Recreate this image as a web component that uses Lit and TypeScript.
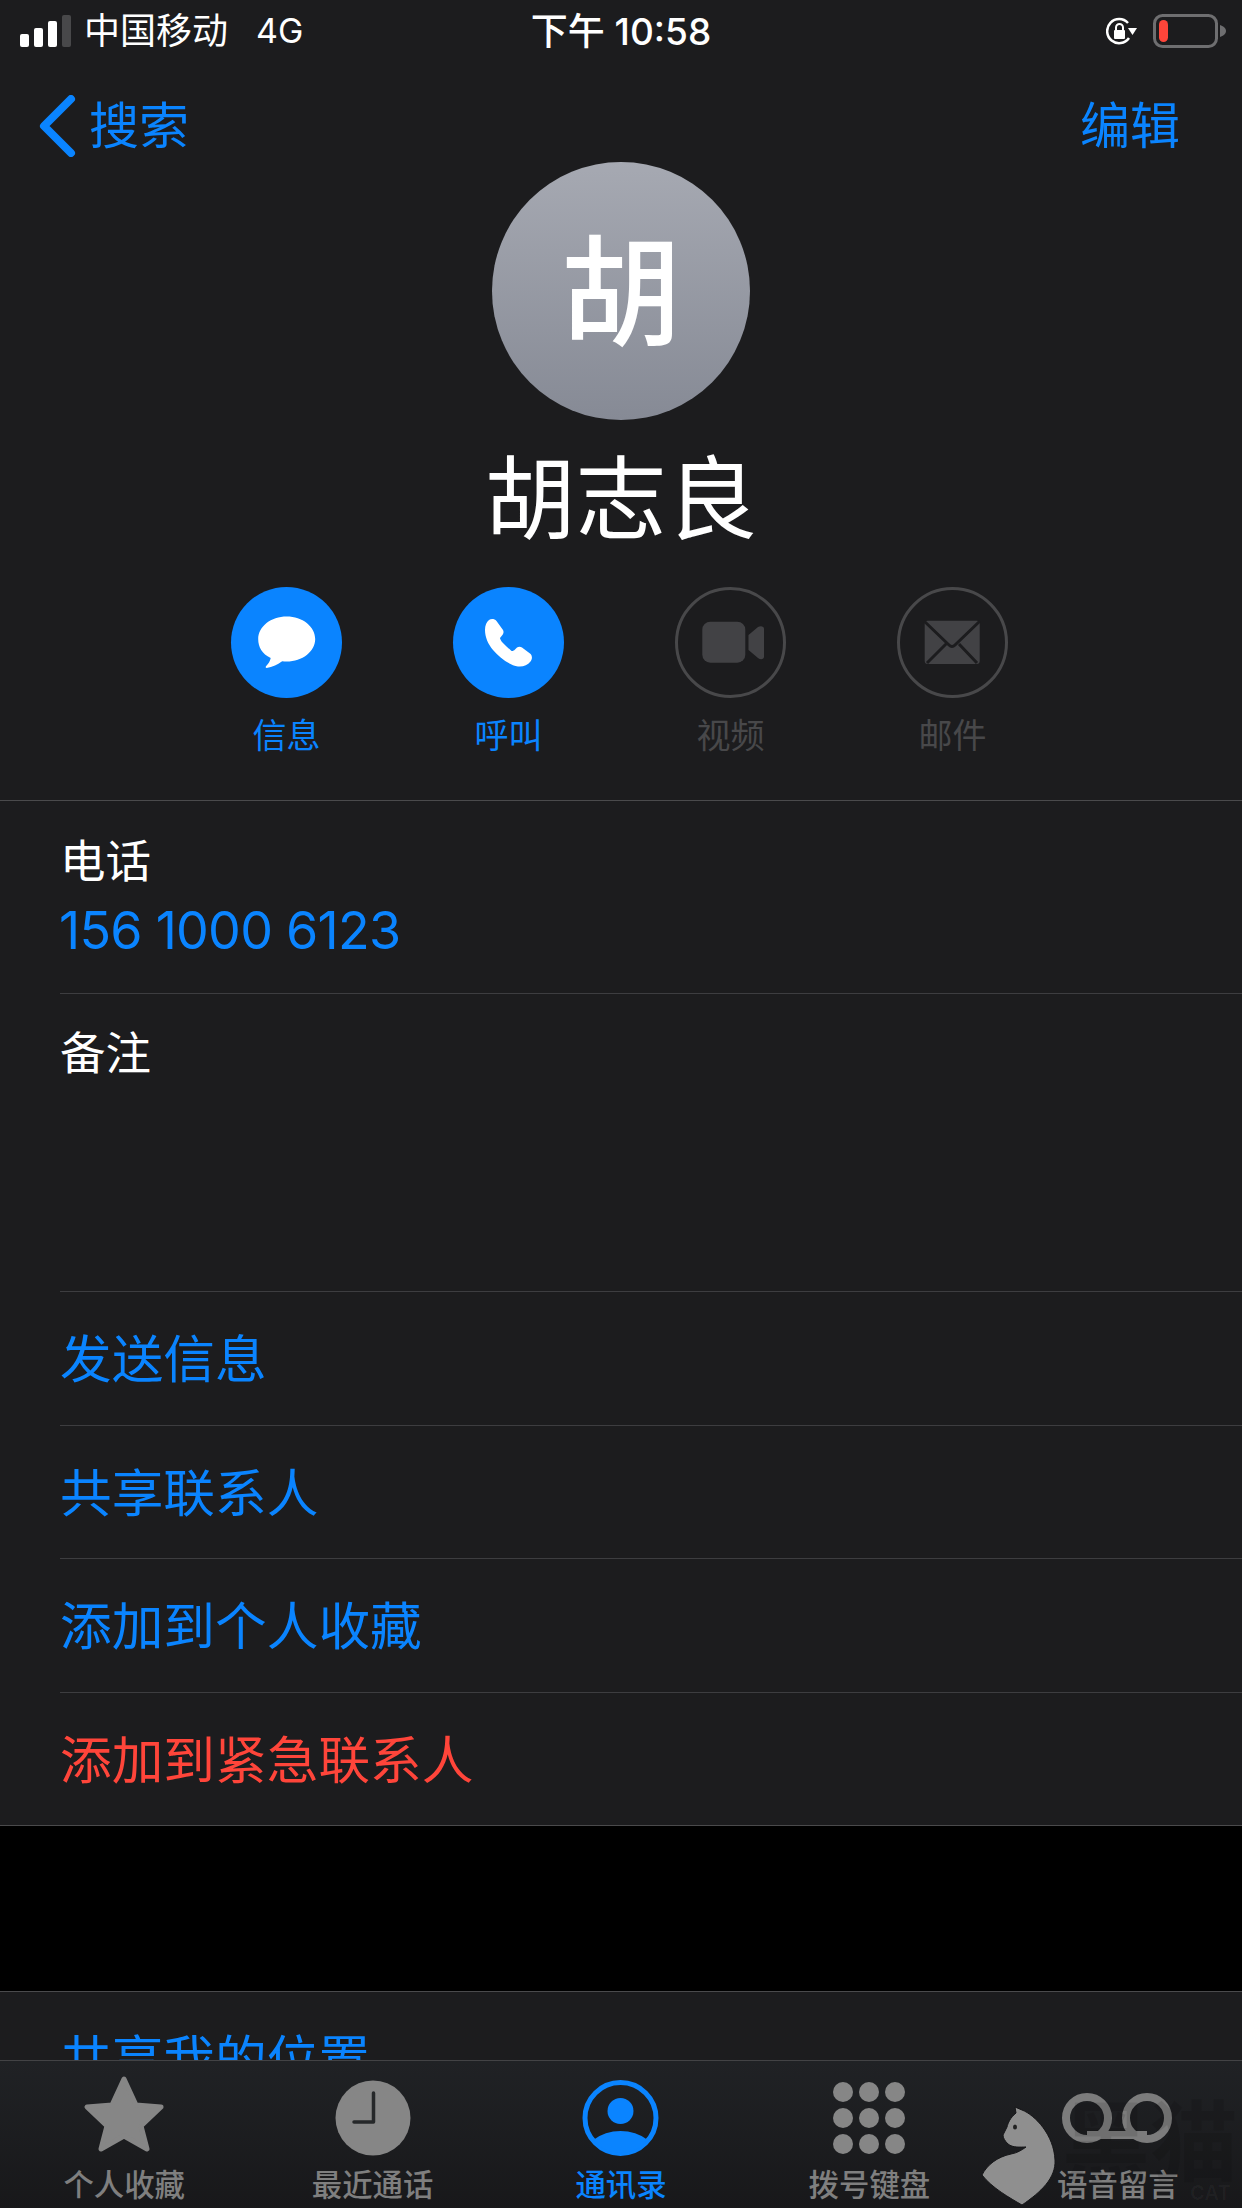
import { LitElement, html, css, svg } from "lit";
import { customElement } from "lit/decorators.js";

const BLUE = "#0a84ff";
const TAB_GREY = "#868686";
const actions = [
  { label: "信息", on: true, icon: svg`<path fill="#fff" d="M55.700 29.500c15.700 0 28.500 10 28.500 22.500s-12.800 22.500-28.500 22.500c-1.500 0-3 0-4.500-.2-4 3-10 6-15.500 6.700-1 0-1.500-1-.5-2 2-2 4-5 4.500-8C31 67 27.200 60 27.200 52c0-12.500 12.800-22.500 28.500-22.500z"/>` },
  { label: "呼叫", on: true, icon: svg`<path fill="#fff" d="M36 33c2-1.500 5.500-1.500 7.500 1L50 43c1 2 .5 4-1 5.500L47 51c0 1 1 2.500 2 4 3 3 6 6 9 8.500 1 1 2.500.5 4-1l2-2c1.500-1 3.500-1 5 0l8 6c2.500 2 2.500 5.500.5 8-3 4-7.500 5.500-12.500 5-9-1.500-19-9.500-25-16.500-5-6-8-13-8-20 0-4.500 1.500-8 4-10z"/>` },
  { label: "视频", on: false, icon: svg`<rect x="27.300" y="34.700" width="43" height="41" rx="8" fill="#424245"/><path fill="#424245" d="M73.500 48L83 40c2.500-1.500 6-1 6 2v27.500c0 3-3.500 3.500-6 1.500l-9.500-8z"/>` },
  { label: "邮件", on: false, icon: svg`<rect x="27.700" y="33.700" width="55" height="43.300" rx="3" fill="#424245"/><path d="M27 34l25 24q3 3 6 0l25-24M30 76l19-19M80 76L62 57" fill="none" stroke="#1c1c1e" stroke-width="3"/>` },
];

const dots = [19, 45, 71].flatMap((y) => [19, 45, 71].map((x) => svg`<circle cx="${x}" cy="${y - 3}" r="10" fill="${TAB_GREY}"/>`));

const tabs = [
  { label: "个人收藏", icon: svg`<path fill="${TAB_GREY}" stroke="${TAB_GREY}" stroke-width="5" stroke-linejoin="round" d="M45 3l12 26 25 2-20 19 6 23-23-13-23 13 6-23L8 31l25-2z"/>` },
  { label: "最近通话", icon: svg`<circle cx="45" cy="42" r="37.500" fill="${TAB_GREY}"/><path d="M45.500 17v29H26" fill="none" stroke="#26282a" stroke-width="3.500" stroke-linecap="round" stroke-linejoin="round"/>` },
  { label: "通讯录", active: true, icon: svg`<defs><clipPath id="pc"><circle cx="44.500" cy="42" r="35"/></clipPath></defs><circle cx="44.500" cy="42" r="35.500" fill="none" stroke="${BLUE}" stroke-width="5"/><circle cx="44.500" cy="35" r="13" fill="${BLUE}"/><ellipse cx="44.500" cy="85" rx="38" ry="30" fill="${BLUE}" clip-path="url(#pc)"/>` },
  { label: "拨号键盘", icon: svg`${dots}` },
  { label: "语音留言", icon: svg`<circle cx="14" cy="42" r="21" fill="none" stroke="#7c7c7c" stroke-width="8"/><circle cx="74" cy="42" r="21" fill="none" stroke="#7c7c7c" stroke-width="8"/><path d="M14 59h60" stroke="#7c7c7c" stroke-width="8"/>` },
];

@customElement("app-root")
export class AppRoot extends LitElement {
  static styles = css`
    :host {
      --blue: #0a84ff;
      display: block;
      width: 1242px;
      height: 2208px;
      overflow: hidden;
      position: relative;
      background: #1c1c1e;
      color: #fff;
      font-family: Inter, "Noto Sans CJK SC", "Noto Sans", sans-serif;
    }
    .status {
      height: 62px;
      display: flex;
      align-items: center;
      padding: 0 16px 0 20px;
      position: relative;
      font-size: 36px;
      line-height: 1;
    }
    .bars { display: flex; align-items: flex-end; gap: 5px; height: 32px; margin-right: 13px; }
    .bars i { width: 9px; background: #fff; border-radius: 2px; display: block; }
    .bars i:last-child { background: #48484a; }
    .net { margin-left: 28px; font-size: 34px; }
    .time {
      position: absolute; left: 0; right: 0; top: 13px; text-align: center;
      font-size: 37px; font-weight: 500;
    }
    .status-right { margin-left: auto; display: flex; align-items: center; gap: 16px; }
    .status-right svg { display: block; }
    .nav {
      height: 100px;
      box-sizing: border-box;
      padding: 28px 62px 0 38px;
      display: flex;
      align-items: center;
      justify-content: space-between;
      color: var(--blue);
      font-size: 50px;
      line-height: 1;
    }
    .back { display: flex; align-items: center; gap: 13px; }
    .hero { display: flex; flex-direction: column; align-items: center; }
    .avatar {
      width: 258px; height: 258px; border-radius: 50%;
      background: linear-gradient(#a6a9b2, #868a95);
      display: flex; align-items: center; justify-content: center;
      font-size: 120px; line-height: 1; font-weight: 500;
      padding-top: 5px; box-sizing: border-box;
    }
    .name { font-size: 91px; line-height: 130px; margin-top: 14px; font-weight: 400; }
    .actions { display: flex; gap: 111px; margin-top: 23px; margin-right: 3px; }
    .action { width: 111px; display: flex; flex-direction: column; align-items: center; color: var(--blue); font-size: 34px; line-height: 48px; white-space: nowrap; }
    .action.off { color: #48484a; }
    .disc { width: 111px; height: 111px; border-radius: 50%; box-sizing: border-box; margin-bottom: 14px; }
    .on .disc { background: var(--blue); }
    .off .disc { border: 3px solid #48484a; }
    .disc svg { display: block; width: 111px; height: 111px; }
    .off .disc svg { margin: -3px; }
    .top-sep { height: 1px; background: #4a4a4c; margin-top: 40px; }
    .field { margin-left: 60px; border-bottom: 1px solid #3d3d40; box-sizing: border-box; }
    .field .k { font-size: 45.500px; line-height: 60px; padding-top: 30px; }
    .phone { height: 193px; }
    .phone .k { padding-top: 31px; }
    .phone .v { color: var(--blue); font-size: 52px; line-height: 66px; margin: 6px 0 0 -1px; letter-spacing: -0.75px; }
    .note { height: 298px; }
    .row {
      height: 133.500px; box-sizing: border-box; margin-left: 60px; padding-top: 4px;
      display: flex; align-items: center;
      font-size: 51.700px; line-height: 1; color: var(--blue);
      border-bottom: 1px solid #3d3d40;
    }
    .row.red { color: #ff453a; }
    .row.end { margin-left: 0; padding-left: 60px; border-bottom-color: #4a4a4c; }
    .gap { height: 166px; background: #000; border-bottom: 1px solid #4a4a4c; box-sizing: border-box; }
    .tabbar {
      position: absolute; left: 0; right: 0; bottom: 0; height: 148px;
      background: linear-gradient(#202225, #18181a);
      border-top: 1px solid #434345;
      display: grid; grid-template-columns: repeat(5, 1fr);
      box-sizing: border-box;
    }
    .tab { display: flex; flex-direction: column; align-items: center; color: #7f7f7f; font-size: 30.400px; line-height: 40px; padding-top: 15px; white-space: nowrap; font-weight: 500; }
    .tab svg { width: 90px; height: 89px; overflow: visible; display: block; }
    .tab.active { color: var(--blue); }
    .cat { position: absolute; left: 975px; top: 2100px; width: 82px; height: 108px; }
    .mark { position: absolute; left: 1062px; top: 2098px; font-size: 88px; line-height: 1; font-weight: 700; color: rgba(0, 0, 0, 0.1); white-space: nowrap; }
    .mark-en { position: absolute; left: 1190px; top: 2183px; font-size: 20px; line-height: 1; font-weight: 700; color: rgba(255, 255, 255, 0.03); white-space: nowrap; }
  `;

  render() {
    return html`
      <div class="status">
        <div class="bars"><i style="height:13px"></i><i style="height:19px"></i><i style="height:26px"></i><i style="height:32px"></i></div>
        <span>中国移动</span><span class="net">4G</span>
        <div class="time">下午 10:58</div>
        <div class="status-right">
          <svg width="31" height="30" viewBox="0 0 31 30"><path d="M22 7A12 12 0 1 0 23 22" fill="none" stroke="#fff" stroke-width="2.500"/><path d="M22 12h9l-4.500 7z" fill="#fff"/><rect x="8" y="14" width="11" height="9" rx="1" fill="#fff"/><path d="M10 14v-2.500a3.500 3.500 0 0 1 7 0V14" fill="none" stroke="#fff" stroke-width="2"/></svg>
          <svg width="73" height="34" viewBox="0 0 73 34"><rect x="1.500" y="1.500" width="62" height="31" rx="8" fill="none" stroke="#6e6e70" stroke-width="3"/><rect x="6" y="6" width="9" height="22" rx="4.500" fill="#ff453a"/><path d="M67 11c3 1 6 3 6 6s-3 5-6 6z" fill="#6e6e70"/></svg>
        </div>
      </div>
      <div class="nav">
        <span class="back"><svg width="38" height="62" viewBox="0 0 38 62"><path d="M33 4L6 31l27 27" fill="none" stroke="${BLUE}" stroke-width="8" stroke-linecap="round" stroke-linejoin="round"/></svg>搜索</span>
        <span>编辑</span>
      </div>
      <div class="hero">
        <div class="avatar">胡</div>
        <div class="name">胡志良</div>
        <div class="actions">
          ${actions.map((a) => html`<div class="action ${a.on ? "on" : "off"}"><div class="disc"><svg viewBox="0 0 111 111">${a.icon}</svg></div>${a.label}</div>`)}
        </div>
      </div>
      <div class="top-sep"></div>
      <div class="field phone"><div class="k">电话</div><div class="v">156 1000 6123</div></div>
      <div class="field note"><div class="k">备注</div></div>
      <div class="row">发送信息</div>
      <div class="row">共享联系人</div>
      <div class="row">添加到个人收藏</div>
      <div class="row red end">添加到紧急联系人</div>
      <div class="gap"></div>
      <div class="row">共享我的位置</div>
      <div class="tabbar">
        ${tabs.map((t) => html`<div class="tab ${t.active ? "active" : ""}"><svg viewBox="0 0 90 89">${t.icon}</svg>${t.label}</div>`)}
      </div>
      <div class="mark">黑猫</div>
      <div class="mark-en">CAT</div>
      <svg class="cat" viewBox="0 0 82 108"><path fill="#8f8f8f" stroke="#161618" stroke-width="1" d="M40 7l7 3c13 5 32 25 33 50 1 18-14 32-33 45-12-7-30-17-40-30 5-10 15-18 29-21 6-1 11-4 15-7-6 0-13 1-18-3-3-3-5-6-5-9l4-8c1-4 3-9 9-14z"/><ellipse cx="40" cy="27" rx="2" ry="2.500" fill="#222"/></svg>
    `;
  }
}
